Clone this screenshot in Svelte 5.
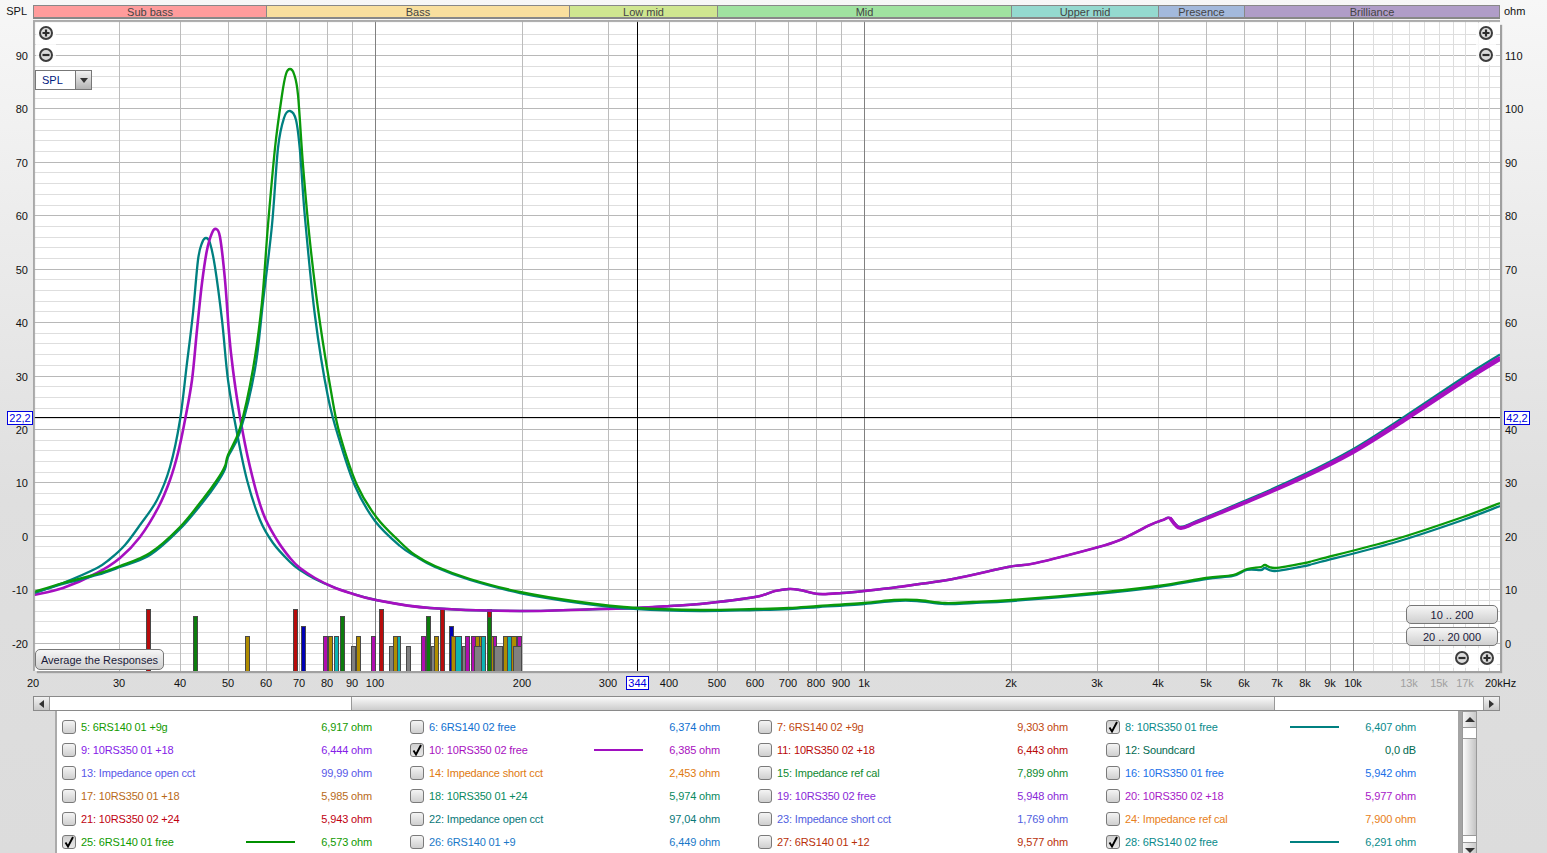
<script>
  const X = (f) => 33 + 489 * Math.log10(f / 20);
  const Y = (v) => 536.3 - v * 5.343;

  const bands = [
    ['Sub bass', 233, '#ff9c9c'], ['Bass', 303, '#f9df9e'], ['Low mid', 148, '#cfe690'],
    ['Mid', 294, '#a0e2a0'], ['Upper mid', 147, '#94d9cf'], ['Presence', 86, '#a3b9dc'], ['Brilliance', 256, '#b09dc8']
  ];

  const vLines = [];
  for (const d of [10, 100, 1000, 10000]) {
    for (let m = 1; m < 10; m++) {
      const f = d * m;
      if (f <= 20 || f >= 20000) continue;
      vLines.push({ x: Math.round(X(f)) + 0.5, c: f === 100 || f === 1000 || f === 10000 ? '#808080' : '#bcbcbc' });
    }
  }
  for (const f of [11000, 12000, 13000, 14000, 15000, 16000, 17000, 18000, 19000]) {
    vLines.push({ x: Math.round(X(f)) + 0.5, c: '#dddddd' });
  }

  const hLines = [];
  for (let v = -24; v <= 94; v += 2) {
    hLines.push({ y: Math.floor(Y(v)) + 0.5, c: v % 10 === 0 ? '#b8b8b8' : '#dedede' });
  }

  const leftLabels = [90, 80, 70, 60, 50, 40, 30, 20, 10, 0, -10, -20];
  const labelTop = (v) => Math.floor(Y(v)) - 27;

  const xLabels = [
    [20, '20'], [30, '30'], [40, '40'], [50, '50'], [60, '60'], [70, '70'], [80, '80'], [90, '90'], [100, '100'],
    [200, '200'], [300, '300'], [400, '400'], [500, '500'], [600, '600'], [700, '700'], [800, '800'], [900, '900'],
    [1000, '1k'], [2000, '2k'], [3000, '3k'], [4000, '4k'], [5000, '5k'], [6000, '6k'], [7000, '7k'], [8000, '8k'],
    [9000, '9k'], [10000, '10k'], [13000, '13k', true], [15000, '15k', true], [17000, '17k', true]
  ];

  const common = [[700, 604], [755, 597], [775, 591], [789, 589], [800, 590], [819, 594], [842, 593], [864, 591], [898, 587], [953, 579], [1008, 567], [1036, 563], [1095, 548], [1120, 540], [1150, 525], [1163, 520], [1170, 518], [1180, 528], [1197, 522], [1243, 503], [1300, 478], [1353, 451], [1407, 417], [1463, 380], [1500, 357]];
  const purple = [[34, 595], [63, 588], [97, 573], [120, 558], [140, 537], [158, 508], [170, 480], [178, 453], [185, 420], [192, 380], [197, 330], [202, 283], [207, 250], [212, 233], [216, 229], [220, 237], [225, 280], [229, 333], [233, 370], [240, 417], [250, 467], [263, 513], [277, 540], [290, 558], [300, 568], [315, 578], [333, 587], [350, 593], [376, 600], [430, 608], [520, 611], [600, 609], [637, 608], [670, 606], ...common];
  const teal = [[34, 593], [63, 583], [97, 568], [110, 559], [125, 545], [140, 525], [157, 500], [170, 467], [180, 420], [187, 363], [193, 313], [198, 260], [202, 243], [206, 238], [210, 243], [215, 267], [222, 320], [228, 380], [237, 433], [247, 480], [260, 520], [273, 543], [290, 562], [300, 570], [315, 579], [333, 587], [350, 593], [376, 600], [430, 608], [520, 611], [600, 609], [637, 608], [670, 606], ...common.map(([x, y]) => [x, y - (x > 1170 ? 1 + (x - 1170) / 220 : 0)])];
  const lowTail = [[415, 555], [435, 566], [470, 579], [520, 592], [580, 602], [637, 608], [700, 610], [755, 609], [789, 608], [819, 606], [864, 603], [894, 600], [917, 600], [945, 603], [973, 602], [1012, 600], [1095, 593], [1158, 586], [1206, 578], [1233, 575], [1247, 569], [1261, 567], [1265, 565], [1275, 568], [1305, 563], [1320, 559], [1393, 540], [1463, 517], [1500, 503]];
  const green = [[34, 592], [63, 583], [97, 574], [120, 566], [150, 553], [180, 527], [203, 499], [217, 480], [225, 466], [228, 455], [240, 428], [253, 369], [262, 302], [268, 225], [275, 148], [282, 95], [286, 74], [290, 69], [294, 74], [298, 95], [303, 165], [310, 242], [320, 323], [332, 397], [340, 435], [357, 485], [377, 518], [400, 542], ...lowTail];
  const teal2 = [[34, 593], [63, 584], [97, 575], [120, 567], [150, 555], [180, 529], [203, 502], [217, 483], [225, 469], [228, 457], [240, 432], [255, 369], [263, 302], [272, 225], [278, 148], [284, 118], [290, 111], [296, 120], [300, 151], [305, 218], [315, 316], [328, 397], [340, 442], [355, 486], [375, 521], [400, 546], ...lowTail.map(([x, y]) => [x, y + (x > 1250 ? 3 : 1)])];

  function smooth(p) {
    let d = `M${p[0][0]} ${p[0][1]}`;
    for (let i = 0; i < p.length - 1; i++) {
      const a = p[Math.max(i - 1, 0)], b = p[i], c = p[i + 1], e = p[Math.min(i + 2, p.length - 1)];
      const k = 6;
      d += `C${(b[0] + (c[0] - a[0]) / k).toFixed(1)} ${(b[1] + (c[1] - a[1]) / k).toFixed(1)} ${(c[0] - (e[0] - b[0]) / k).toFixed(1)} ${(c[1] - (e[1] - b[1]) / k).toFixed(1)} ${c[0]} ${c[1]}`;
    }
    return d;
  }
  const thick = common.filter(([x]) => x >= 1170).map(([x, y]) => [x, y + (x - 1170) / 140]);

  const R = '#b80c0c', Gn = '#0c7c0c', Go = '#b08c00', B = '#0000b4', P = '#b00cb0', C = '#0cb4b4', Gy = '#808080';
  const bars = [
    [147, 4, 609, R], [194, 4, 616, Gn], [246, 4, 636, Go], [294, 4, 609, R], [302, 4, 626, B],
    [324, 4, 636, P], [329, 4, 636, Go], [335, 4, 636, C], [341, 4, 616, Gn], [352, 4, 646, Gy], [357, 4, 636, Go],
    [372, 4, 636, P], [380, 4, 609, R], [390, 4, 646, Gy], [394, 4, 636, Go], [398, 3, 636, C], [407, 4, 646, Gy],
    [422, 4, 636, P], [427, 4, 616, Gn], [432, 4, 646, Gy], [435, 4, 636, Go], [441, 4, 609, R], [450, 4, 626, B],
    [452, 4, 636, Go], [456, 6, 636, C], [463, 4, 646, Gy], [466, 4, 636, P], [472, 4, 636, P], [476, 4, 636, Go], [480, 2, 636, Go], [482, 4, 636, C],
    [475, 7, 646, Gy], [488, 4, 609, R], [488, 4, 617, Gn], [492, 3, 636, Go], [494, 3, 636, P], [495, 8, 646, Gy],
    [504, 4, 636, Go], [508, 4, 636, C], [512, 5, 636, Go], [518, 4, 636, P], [514, 8, 646, Gy]
  ];

  const items = [
    ['5: 6RS140 01 +9g', '6,917 ohm', '#149a00'], ['6: 6RS140 02 free', '6,374 ohm', '#1070d0'], ['7: 6RS140 02 +9g', '9,303 ohm', '#c04810'], ['8: 10RS350 01 free', '6,407 ohm', '#088a8a', '#008080'],
    ['9: 10RS350 01 +18', '6,444 ohm', '#8420e8'], ['10: 10RS350 02 free', '6,385 ohm', '#a810c0', '#a010c0'], ['11: 10RS350 02 +18', '6,443 ohm', '#b80808'], ['12: Soundcard', '0,0 dB', '#006a50'],
    ['13: Impedance open cct', '99,99 ohm', '#5858e8'], ['14: Impedance short cct', '2,453 ohm', '#e07a10'], ['15: Impedance ref cal', '7,899 ohm', '#108a30'], ['16: 10RS350 01 free', '5,942 ohm', '#2070e8'],
    ['17: 10RS350 01 +18', '5,985 ohm', '#b86a18'], ['18: 10RS350 01 +24', '5,974 ohm', '#088a60'], ['19: 10RS350 02 free', '5,948 ohm', '#8828d8'], ['20: 10RS350 02 +18', '5,977 ohm', '#a818c8'],
    ['21: 10RS350 02 +24', '5,943 ohm', '#c00010'], ['22: Impedance open cct', '97,04 ohm', '#087878'], ['23: Impedance short cct', '1,769 ohm', '#5060e0'], ['24: Impedance ref cal', '7,900 ohm', '#e88020'],
    ['25: 6RS140 01 free', '6,573 ohm', '#109a00', '#009000'], ['26: 6RS140 01 +9', '6,449 ohm', '#1878c8'], ['27: 6RS140 01 +12', '9,577 ohm', '#b83008'], ['28: 6RS140 02 free', '6,291 ohm', '#088a8a', '#008080']
  ];
  const checked = new Set(['8:', '10:', '25:', '28:']);
</script>

{#snippet zoomIcon(plus)}
  <svg class="zoomicon" width="16" height="16" viewBox="0 0 16 16" aria-hidden="true">
    <circle cx="8" cy="8" r="6" fill="#dcdcdc" stroke="#3c3c3c" stroke-width="2"></circle>
    <path d={plus ? 'M4.5 8h7M8 4.5v7' : 'M4.5 8h7'} stroke="#2c2c2c" stroke-width="2.2" fill="none"></path>
  </svg>
{/snippet}

<div class="page">
  <header class="bandrow">
    <span class="unit left">SPL</span>
    <div class="bands">
      {#each bands as [name, w, c]}
        <div class="band" style:width="{w}px" style:background={c}>{name}</div>
      {/each}
    </div>
    <span class="unit right">ohm</span>
  </header>

  <div class="chartrow">
    <div class="yaxis leftaxis">
      {#each leftLabels as v}
        <span class="ylab" style:top="{labelTop(v)}px">{v}</span>
      {/each}
      <span class="cursorval" style:top="{418 - 21 - 7}px">22,2</span>
    </div>

    <div class="plot">
      <svg class="graph" width="1467" height="650" viewBox="33 21 1467 650" aria-hidden="true">
        <rect x="33" y="21" width="1467" height="650" fill="#fff"></rect>
        {#each hLines as l}
          <line x1="33" x2="1500" y1={l.y} y2={l.y} stroke={l.c}></line>
        {/each}
        {#each vLines as l}
          <line x1={l.x} x2={l.x} y1="21" y2="671" stroke={l.c}></line>
        {/each}
        {#each bars as [x, w, top, c]}
          <rect x={x - 0.5} y={top + 0.5} width={w} height={671 - top} fill={c} stroke="#484848"></rect>
        {/each}
        <line x1="637.5" x2="637.5" y1="21" y2="671" stroke="#000"></line>
        <line x1="33" x2="1500" y1="417.5" y2="417.5" stroke="#000"></line>
        <g fill="none" stroke-linejoin="round">
          <path d={smooth(teal)} stroke="#008080" stroke-width="2.3"></path>
          <path d={smooth(purple)} stroke="#a60fc0" stroke-width="2.6"></path>
          <path d={smooth(thick)} stroke="#a60fc0" stroke-width="3.6"></path>
          <path d={smooth(teal2)} stroke="#008080" stroke-width="2.3"></path>
          <path d={smooth(green)} stroke="#0a9a0a" stroke-width="2.3"></path>
        </g>
      </svg>
      <div class="edge"></div>

      <div class="zoomgroup tl">{@render zoomIcon(true)}{@render zoomIcon(false)}</div>
      <div class="zoomgroup tr">{@render zoomIcon(true)}{@render zoomIcon(false)}</div>
      <div class="zoomgroup br">{@render zoomIcon(false)}{@render zoomIcon(true)}</div>

      <div class="select">
        <span class="selval">SPL</span>
        <span class="selarrow"><i></i></span>
      </div>

      <button class="btn avg">Average the Responses</button>
      <div class="ranges">
        <button class="btn">10 .. 200</button>
        <button class="btn">20 .. 20 000</button>
      </div>
    </div>

    <div class="yaxis rightaxis">
      {#each leftLabels as v}
        <span class="ylab" style:top="{labelTop(v)}px">{v + 20}</span>
      {/each}
      <span class="cursorval" style:top="{418 - 21 - 7}px">42,2</span>
    </div>
  </div>

  <div class="xaxis">
    {#each xLabels as [f, t, dim]}
      <span class="xlab" class:dim style:left="{Math.round(X(f))}px">{t}</span>
    {/each}
    <span class="xcursor">344</span>
    <span class="xend">20kHz</span>
  </div>

  <div class="hscroll">
    <span class="sbtn"><i class="tri-left"></i></span>
    <span class="hspace before"></span>
    <span class="hthumb"></span>
    <span class="hspace"></span>
    <span class="sbtn"><i class="tri-right"></i></span>
  </div>

  <div class="lower">
    <div class="list">
      {#each items as [name, value, color, line]}
        <div class="item" style:color={color}>
          <span class="check" class:on={checked.has(name.split(' ')[0])}>
            {#if checked.has(name.split(' ')[0])}
              <svg width="12" height="12" viewBox="0 0 12 12" aria-hidden="true"><path d="M2.5 6.5 5 10.5 10 1" fill="none" stroke="#000" stroke-width="1.9"></path></svg>
            {/if}
          </span>
          <span class="name">{name}</span>
          <span class="swatch">{#if line}<i style:background={line}></i>{/if}</span>
          <span class="value">{value}</span>
        </div>
      {/each}
    </div>
    <div class="vscroll">
      <span class="vbtn"><i class="tri-up"></i></span>
      <span class="vspace first"></span>
      <span class="vthumb"></span>
      <span class="vspace last"></span>
      <span class="vbtn end"><i class="tri-down"></i></span>
    </div>
  </div>
</div>

<style>
  :global(body) { margin: 0; background: #dcdcdc; }
  .page {
    width: 1547px; height: 853px; overflow: hidden; display: flex; flex-direction: column;
    font-family: "Liberation Sans", Arial, sans-serif; font-size: 11px; color: #111;
    background: linear-gradient(#f7f7f7 0, #dfdfdf 500px, #dcdcdc 100%);
  }
  .bandrow { height: 21px; box-sizing: border-box; padding-top: 5px; display: flex; flex: none; }
  .unit { line-height: 13px; }
  .unit.left { width: 33px; padding-right: 6px; box-sizing: border-box; text-align: right; }
  .unit.right { padding-left: 4px; }
  .bands { width: 1467px; height: 14px; display: flex; box-sizing: border-box; border: 1px solid #888; border-bottom-width: 2px; }
  .band { box-sizing: border-box; text-align: center; line-height: 12px; color: #444; border-right: 1px solid #888; flex: none; }
  .band:last-child { border-right: 0; flex: 1; }

  .chartrow { height: 650px; display: flex; flex: none; }
  .yaxis { position: relative; flex: none; }
  .leftaxis { width: 33px; }
  .rightaxis { width: 47px; }
  .ylab { position: absolute; line-height: 14px; }
  .leftaxis .ylab { right: 5px; }
  .rightaxis .ylab { left: 5px; }
  .cursorval {
    position: absolute; width: 24px; height: 12px; line-height: 12px; text-align: center; background: #fff;
    border: 1px solid #0000e0; color: #0000e0;
  }
  .leftaxis .cursorval { left: 7px; }
  .rightaxis .cursorval { left: 4px; }

  .plot { position: relative; width: 1467px; height: 650px; flex: none; }
  .graph { display: block; }
  .edge {
    position: absolute; inset: 0; pointer-events: none;
    box-shadow: inset 3px 2px 1px -1px #a8a8a8, 3px 3px 1px -1px #a0a0a0, 0 -1px 0 #aaa;
  }
  .zoomgroup { position: absolute; display: flex; background: rgba(255, 255, 255, 0.75); padding: 2px; gap: 6px; box-sizing: border-box; }
  .zoomicon { display: block; }
  .tl, .tr { flex-direction: column; top: 2px; width: 20px; align-items: center; }
  .tl { left: 3px; }
  .tr { right: 4px; }
  .br { right: 3px; bottom: 3px; gap: 9px; }

  .select {
    position: absolute; left: 2px; top: 49px; width: 57px; height: 20px; box-sizing: border-box;
    display: flex; background: #fff; border: 1px solid #777;
  }
  .selval { flex: 1; padding-left: 6px; line-height: 18px; color: #002080; }
  .selarrow { width: 15px; border-left: 1px solid #777; background: linear-gradient(#f2f2f2, #b4b4b4); display: flex; align-items: center; justify-content: center; }
  .selarrow i { border: 4px solid transparent; border-top: 5px solid #333; border-bottom: 0; }

  .btn {
    display: block; font: inherit; color: #1a1a3a; padding: 0; box-sizing: border-box;
    border: 1px solid #777; border-radius: 5px; background: linear-gradient(#f6f6f6, #cfcfcf);
  }
  .avg { position: absolute; left: 2px; bottom: 1px; width: 129px; height: 21px; }
  .ranges { position: absolute; right: 2px; top: 584px; width: 92px; display: flex; flex-direction: column; gap: 3px; }
  .ranges .btn { height: 19px; width: 100%; }

  .xaxis { position: relative; height: 25px; flex: none; }
  .xlab { position: absolute; top: 5px; line-height: 14px; transform: translateX(-50%); }
  .xlab.dim { color: #a0a0a0; }
  .xcursor {
    position: absolute; left: 626px; top: 5px; width: 21px; height: 12px; line-height: 12px; text-align: center;
    background: #fff; border: 1px solid #0000e0; color: #0000e0;
  }
  .xend { position: absolute; left: 1485px; top: 5px; line-height: 14px; }

  .hscroll {
    height: 15px; margin-left: 33px; width: 1467px; box-sizing: border-box; flex: none; display: flex;
    border: 1px solid #8a8a8a; background: #fff;
  }
  .sbtn { width: 15px; flex: none; display: flex; align-items: center; justify-content: center; background: linear-gradient(#f2f2f2, #c8c8c8); }
  .sbtn:first-child { border-right: 1px solid #999; }
  .sbtn:last-child { border-left: 1px solid #999; }
  .hspace { width: 208px; flex: none; }
  .hspace.before { width: 301px; }
  .hthumb { flex: 1; background: linear-gradient(#fafafa, #cccccc); border-left: 1px solid #999; border-right: 1px solid #999; }
  .tri-left { border: 4px solid transparent; border-right: 5px solid #333; border-left: 0; }
  .tri-right { border: 4px solid transparent; border-left: 5px solid #333; border-right: 0; }
  .tri-up { border: 5px solid transparent; border-bottom: 5px solid #333; border-top: 0; }
  .tri-down { border: 5px solid transparent; border-top: 5px solid #333; border-bottom: 0; }

  .lower { display: flex; flex: 1; min-height: 0; padding-left: 55px; }
  .list {
    width: 1407px; box-sizing: border-box; flex: none; background: #fff; padding: 4px 0 0 0;
    border-left: 2px solid #ababab; border-right: 4px solid #a4a4a4; letter-spacing: -0.15px;
    display: grid; grid-template-columns: repeat(4, 348px); grid-auto-rows: 23px; align-content: start;
  }
  .item { display: grid; grid-template-columns: 14px 170px 49px 77px; padding-left: 5px; align-items: center; }
  .check {
    width: 14px; height: 14px; box-sizing: border-box; border: 1px solid #7a7a7a; border-radius: 3px;
    background: linear-gradient(#f4f4f4, #cfcfcf); display: flex; align-items: center; justify-content: center;
  }
  .check.on { background: linear-gradient(#d0d0d0, #e8e8e8); }
  .name { padding-left: 5px; white-space: nowrap; }
  .swatch i { display: block; height: 2px; }
  .value { text-align: right; white-space: nowrap; }

  .vscroll { width: 15px; flex: none; display: flex; flex-direction: column; box-sizing: border-box; border: 1px solid #999; border-bottom: 0; }
  .vbtn { height: 15px; flex: none; display: flex; align-items: center; justify-content: center; background: linear-gradient(90deg, #f4f4f4, #cacaca); border-bottom: 1px solid #999; }
  .vbtn.end { border-top: 1px solid #999; border-bottom: 0; }
  .vspace { background: #fff; flex: none; }
  .vspace.first { height: 10px; }
  .vspace.last { height: 6px; }
  .vthumb { height: 98px; flex: none; box-sizing: border-box; background: linear-gradient(90deg, #fbfbfb, #c4c4c4); border-top: 1px solid #999; border-bottom: 1px solid #999; }
</style>
